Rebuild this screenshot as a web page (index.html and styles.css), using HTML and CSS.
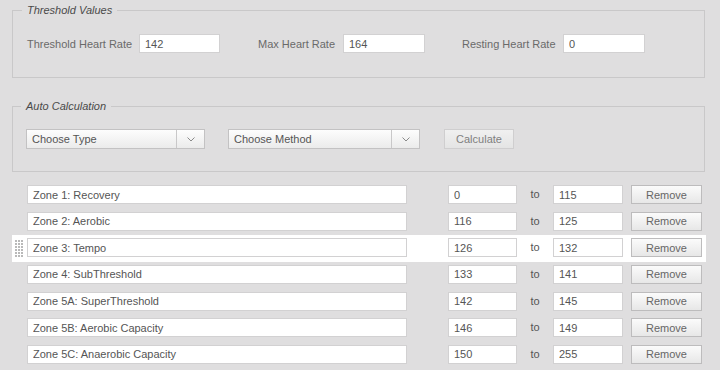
FILE: index.html
```html
<!DOCTYPE html>
<html>
<head>
<meta charset="utf-8">
<link rel="stylesheet" href="styles.css">
</head>
<body>
<div class="page">
  <fieldset class="box box-threshold">
    <legend>Threshold Values</legend>
    <div class="thr-grid">
      <label class="lbl">Threshold Heart Rate</label>
      <input class="field" type="text" value="142">
      <span></span>
      <label class="lbl">Max Heart Rate</label>
      <input class="field" type="text" value="164">
      <span></span>
      <label class="lbl">Resting Heart Rate</label>
      <input class="field" type="text" value="0">
    </div>
  </fieldset>

  <fieldset class="box box-auto">
    <legend>Auto Calculation</legend>
    <div class="auto-row">
      <div class="select select-type">
        <span class="select-value">Choose Type</span>
        <span class="select-arrow"><svg width="8" height="5" viewBox="0 0 8 5"><polyline points="0.5,0.5 4,4 7.5,0.5" fill="none" stroke="#8a8a8a" stroke-width="1"/></svg></span>
      </div>
      <div class="select select-method">
        <span class="select-value">Choose Method</span>
        <span class="select-arrow"><svg width="8" height="5" viewBox="0 0 8 5"><polyline points="0.5,0.5 4,4 7.5,0.5" fill="none" stroke="#8a8a8a" stroke-width="1"/></svg></span>
      </div>
      <button class="btn btn-calc">Calculate</button>
    </div>
  </fieldset>

  <ul class="zones">
    <li class="zone">
      <span class="handle"></span>
      <input class="field name" type="text" value="Zone 1: Recovery">
      <input class="field num from" type="text" value="0">
      <span class="to">to</span>
      <input class="field num upto" type="text" value="115">
      <button class="btn btn-remove">Remove</button>
    </li>
    <li class="zone">
      <span class="handle"></span>
      <input class="field name" type="text" value="Zone 2: Aerobic">
      <input class="field num from" type="text" value="116">
      <span class="to">to</span>
      <input class="field num upto" type="text" value="125">
      <button class="btn btn-remove">Remove</button>
    </li>
    <li class="zone zone-active">
      <span class="handle"><svg width="8" height="17" viewBox="0 0 8 17"><g fill="#b9b9b9"><rect x="0" y="0" width="2" height="2"/><rect x="3" y="0" width="2" height="2"/><rect x="6" y="0" width="2" height="2"/><rect x="0" y="3" width="2" height="2"/><rect x="3" y="3" width="2" height="2"/><rect x="6" y="3" width="2" height="2"/><rect x="0" y="6" width="2" height="2"/><rect x="3" y="6" width="2" height="2"/><rect x="6" y="6" width="2" height="2"/><rect x="0" y="9" width="2" height="2"/><rect x="3" y="9" width="2" height="2"/><rect x="6" y="9" width="2" height="2"/><rect x="0" y="12" width="2" height="2"/><rect x="3" y="12" width="2" height="2"/><rect x="6" y="12" width="2" height="2"/><rect x="0" y="15" width="2" height="2"/><rect x="3" y="15" width="2" height="2"/><rect x="6" y="15" width="2" height="2"/></g></svg></span>
      <input class="field name" type="text" value="Zone 3: Tempo">
      <input class="field num from" type="text" value="126">
      <span class="to">to</span>
      <input class="field num upto" type="text" value="132">
      <button class="btn btn-remove">Remove</button>
    </li>
    <li class="zone">
      <span class="handle"></span>
      <input class="field name" type="text" value="Zone 4: SubThreshold">
      <input class="field num from" type="text" value="133">
      <span class="to">to</span>
      <input class="field num upto" type="text" value="141">
      <button class="btn btn-remove">Remove</button>
    </li>
    <li class="zone">
      <span class="handle"></span>
      <input class="field name" type="text" value="Zone 5A: SuperThreshold">
      <input class="field num from" type="text" value="142">
      <span class="to">to</span>
      <input class="field num upto" type="text" value="145">
      <button class="btn btn-remove">Remove</button>
    </li>
    <li class="zone">
      <span class="handle"></span>
      <input class="field name" type="text" value="Zone 5B: Aerobic Capacity">
      <input class="field num from" type="text" value="146">
      <span class="to">to</span>
      <input class="field num upto" type="text" value="149">
      <button class="btn btn-remove">Remove</button>
    </li>
    <li class="zone">
      <span class="handle"></span>
      <input class="field name" type="text" value="Zone 5C: Anaerobic Capacity">
      <input class="field num from" type="text" value="150">
      <span class="to">to</span>
      <input class="field num upto" type="text" value="255">
      <button class="btn btn-remove">Remove</button>
    </li>
  </ul>
</div>
</body>
</html>
```

FILE: styles.css
```css
html, body {
  margin: 0;
  padding: 0;
  background: #dfdedf;
}
body {
  font-family: "Liberation Sans", Arial, Helvetica, sans-serif;
  font-size: 11px;
  color: #666;
}
.page {
  width: 720px;
  height: 370px;
  overflow: hidden;
}
.box {
  border: 1px solid #c9c8c9;
  margin: 0 15px 0 12px;
  padding: 0 14px;
  min-width: 0;
}
.box legend {
  font-style: italic;
  font-size: 11px;
  line-height: 14px;
  color: #4a4a4a;
  padding: 0 5px;
  margin-left: -5px;
}
.box-threshold {
  margin-top: 3px;
  padding-top: 17px;
  padding-bottom: 24px;
}
.box-auto {
  margin-top: 21px;
  padding-top: 16px;
  padding-bottom: 22px;
  padding-left: 13px;
}
.thr-grid {
  display: grid;
  grid-template-columns: 112px 81px 38px 85px 82px 37px 101px 82px;
  align-items: center;
}
.lbl {
  color: #6a6a6a;
  white-space: nowrap;
}
.field {
  box-sizing: border-box;
  height: 19px;
  margin: 0;
  border: 1px solid #d2d1d2;
  background: #fff;
  font-family: "Liberation Sans", Arial, Helvetica, sans-serif;
  font-size: 11px;
  color: #555;
  padding: 0 0 0 5px;
  outline: none;
  display: block;
}
.auto-row {
  display: flex;
  align-items: center;
}
.select {
  box-sizing: border-box;
  height: 20px;
  display: flex;
  border: 1px solid #c3c2c3;
  background: linear-gradient(#fdfdfd, #ebebeb);
  color: #555;
}
.select-type { width: 179px; }
.select-method { width: 192px; margin-left: 23px; }
.select-value {
  flex: 1;
  padding-left: 5px;
  line-height: 18px;
}
.select-arrow {
  width: 27px;
  border-left: 1px solid #c9c8c9;
  display: flex;
  align-items: center;
  justify-content: center;
  padding-top: 1px;
}
.btn {
  box-sizing: border-box;
  margin: 0;
  padding: 0;
  font-family: "Liberation Sans", Arial, Helvetica, sans-serif;
  font-size: 11px;
  cursor: default;
}
.btn-calc {
  width: 70px;
  height: 20px;
  margin-left: 24px;
  border: 1px solid #cfcecf;
  background: linear-gradient(#f0f0f0, #e4e4e4);
  color: #7f7f7f;
}
.zones {
  list-style: none;
  margin: 10px 0 0 12px;
  padding: 0;
  width: 694px;
}
.zone {
  height: 26.667px;
  box-sizing: border-box;
  padding: 3px 0 0 3px;
  display: flex;
  align-items: flex-start;
}
.zone-active {
  background: #fff;
}
.handle {
  width: 8px;
  height: 17px;
  margin: 2px 4px 0 0;
  flex: none;
  display: block;
}
.handle svg { display: block; }
.name { width: 380px; }
.num { width: 69px; }
.from { margin-left: 41px; }
.upto { width: 70px; }
.to {
  width: 36px;
  text-align: center;
  line-height: 19px;
  color: #555;
}
.btn-remove {
  width: 71px;
  height: 19px;
  margin-left: 8px;
  border: 1px solid #bdbcbd;
  background: linear-gradient(#fbfbfb, #e7e7e7);
  color: #666;
}
```
